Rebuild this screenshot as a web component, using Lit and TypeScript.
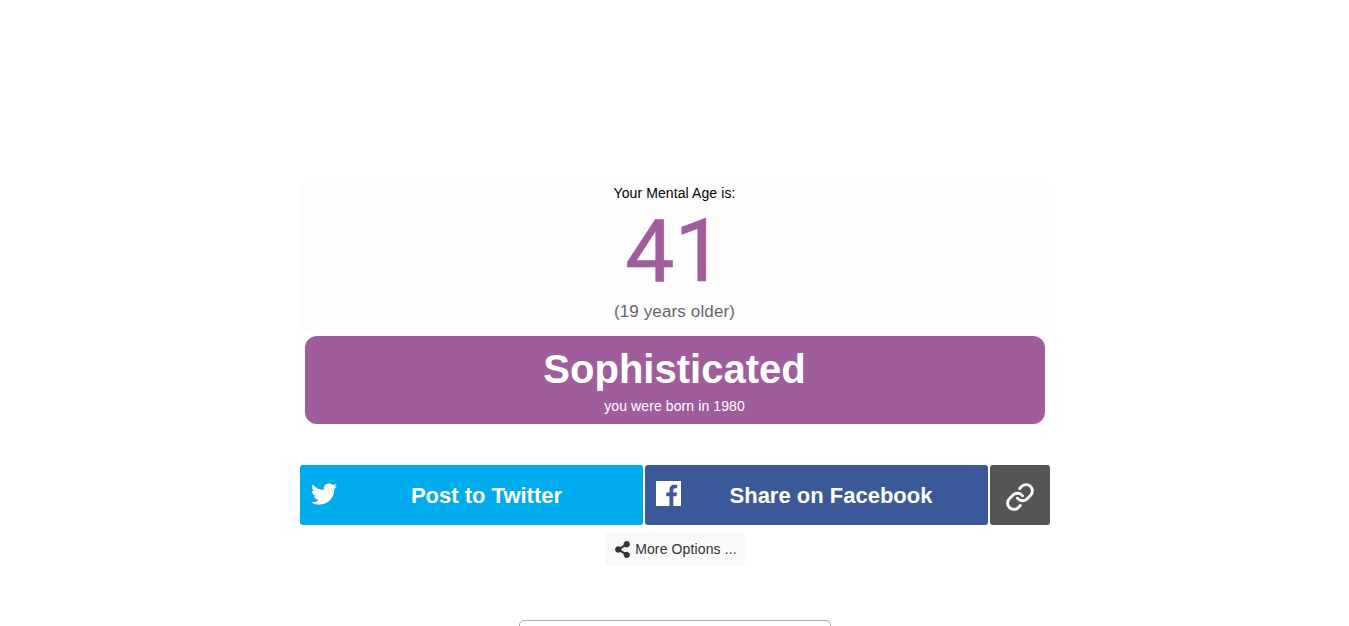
import { LitElement, html, css } from "lit";
import { customElement } from "lit/decorators.js";

@customElement("app-root")
export class AppRoot extends LitElement {
  static styles = css`
    :host {
      display: block;
      height: 626px;
      overflow: hidden;
      background: #fff;
      font-family: "Liberation Sans", Arial, sans-serif;
      padding-top: 182px;
      box-sizing: border-box;
    }
    .wrap {
      width: 750px;
      margin: 0 auto;
      display: flex;
      flex-direction: column;
      align-items: center;
    }
    .panel {
      width: 100%;
      height: 149px;
      background: #fdfdfd;
      border-radius: 5px;
      display: flex;
      flex-direction: column;
      align-items: center;
    }
    .label {
      font-size: 14px;
      line-height: 16px;
      margin-top: 3px;
      color: #000;
      letter-spacing: 0.1px;
    }
    .age {
      font-family: Roboto, "Liberation Sans", sans-serif;
      font-size: 88px;
      line-height: 90px;
      margin-top: 5px;
      color: #a05d9c;
      -webkit-text-stroke: 0.6px #a05d9c;
    }
    .older {
      font-size: 17px;
      line-height: 20px;
      margin-top: 6px;
      color: #666;
      letter-spacing: 0.13px;
    }
    .banner {
      width: 740px;
      height: 88px;
      margin-top: 5px;
      background: #a05d9c;
      border-radius: 12px;
      color: #fff;
      display: flex;
      flex-direction: column;
      align-items: center;
    }
    .title {
      font-size: 40px;
      line-height: 46px;
      font-weight: bold;
      margin-top: 10px;
    }
    .born {
      font-size: 14px;
      line-height: 16px;
      margin-top: 6px;
      letter-spacing: 0.1px;
    }
    .shares {
      width: 100%;
      margin-top: 41px;
      display: grid;
      grid-template-columns: 343px 343px 60px;
      gap: 2px;
    }
    .btn {
      height: 60px;
      border-radius: 3px;
      color: #fff;
      display: flex;
      align-items: center;
      font-size: 22px;
      font-weight: bold;
      box-sizing: border-box;
    }
    .btn span {
      flex: 1;
      text-align: center;
      margin-top: 2px;
    }
    .tw { background: #00aced; padding: 0 6px 0 11px; }
    .fb { background: #3b5998; padding: 0 11px 0 11px; }
    .tw svg { width: 26px; height: 26px; fill: #fff; margin-bottom: 3px; }
    .fb svg { width: 25px; height: 25px; fill: #fff; margin-bottom: 3px; }
    .fb span { margin-left: 5px; }
    .lnk { background: #555; justify-content: center; }
    .lnk svg {
      width: 30px;
      height: 30px;
      margin-top: 3px;
      fill: none;
      stroke: #fff;
      stroke-width: 2.3;
      stroke-linecap: round;
      stroke-linejoin: round;
    }
    .more {
      margin-top: 7px;
      width: 140px;
      height: 34px;
      padding-left: 2px;
      box-sizing: border-box;
      background: #f9f9f9;
      border-radius: 5px;
      display: flex;
      align-items: center;
      justify-content: center;
      gap: 4px;
      font-size: 14px;
      color: #333;
      letter-spacing: 0.13px;
    }
    .more svg { width: 17px; height: 17px; fill: #333; }
    .box {
      width: 312px;
      height: 60px;
      margin-top: 54px;
      border: 1px solid #aaa;
      border-radius: 5px;
      box-sizing: border-box;
      flex: none;
    }
  `;

  render() {
    return html`
      <div class="wrap">
        <div class="panel">
          <div class="label">Your Mental Age is:</div>
          <div class="age">41</div>
          <div class="older">(19 years older)</div>
        </div>
        <div class="banner">
          <div class="title">Sophisticated</div>
          <div class="born">you were born in 1980</div>
        </div>
        <div class="shares">
          <div class="btn tw">
            <svg viewBox="0 0 512 512"><path d="M459.37 151.716c.325 4.548.325 9.097.325 13.645 0 138.72-105.583 298.558-298.558 298.558-59.452 0-114.68-17.219-161.137-47.106 8.447.974 16.568 1.299 25.34 1.299 49.055 0 94.213-16.568 130.274-44.832-46.132-.975-84.792-31.188-98.112-72.772 6.498.974 12.995 1.624 19.818 1.624 9.421 0 18.843-1.3 27.614-3.573-48.081-9.747-84.143-51.98-84.143-102.985v-1.299c13.969 7.797 30.214 12.67 47.431 13.319-28.264-18.843-46.781-51.005-46.781-87.391 0-19.492 5.197-37.36 14.294-52.954 51.655 63.675 129.3 105.258 216.365 109.807-1.624-7.797-2.599-15.918-2.599-24.04 0-57.828 46.782-104.934 104.934-104.934 30.213 0 57.502 12.67 76.67 33.137 23.715-4.548 46.456-13.32 66.599-25.34-7.798 24.366-24.366 44.833-46.132 57.827 21.117-2.273 41.584-8.122 60.426-16.243-14.292 20.791-32.161 39.308-52.628 54.253z"/></svg>
            <span>Post to Twitter</span>
          </div>
          <div class="btn fb">
            <svg viewBox="0 0 24 24"><path fill-rule="evenodd" d="M0 0H24V24H16.6V14.7H19.7L20.2 11H16.6V8.7C16.6 7.6 16.9 6.9 18.4 6.9H20.3V3.6C20 3.6 18.9 3.5 17.6 3.5 14.8 3.5 12.9 5.2 12.9 8.3V11H9.8V14.7H12.9V24H0Z"/></svg>
            <span>Share on Facebook</span>
          </div>
          <div class="btn lnk">
            <svg viewBox="0 0 24 24"><path d="M10 13a5 5 0 0 0 7.54.54l3-3a5 5 0 0 0-7.07-7.07l-1.72 1.71"/><path d="M14 11a5 5 0 0 0-7.54-.54l-3 3a5 5 0 0 0 7.07 7.07l1.71-1.71"/></svg>
          </div>
        </div>
        <div class="more">
          <svg viewBox="0 0 448 512"><path d="M352 320c-22.608 0-43.387 7.819-59.79 20.895l-102.486-64.054a96.551 96.551 0 0 0 0-41.683l102.486-64.054C308.613 184.181 329.392 192 352 192c53.019 0 96-42.981 96-96S405.019 0 352 0s-96 42.981-96 96c0 7.158.79 14.13 2.276 20.841L155.79 180.895C139.387 167.819 118.608 160 96 160c-53.019 0-96 42.981-96 96s42.981 96 96 96c22.608 0 43.387-7.819 59.79-20.895l102.486 64.054A96.301 96.301 0 0 0 256 416c0 53.019 42.981 96 96 96s96-42.981 96-96-42.981-96-96-96z"/></svg>
          More Options ...
        </div>
        <div class="box"></div>
      </div>
    `;
  }
}
